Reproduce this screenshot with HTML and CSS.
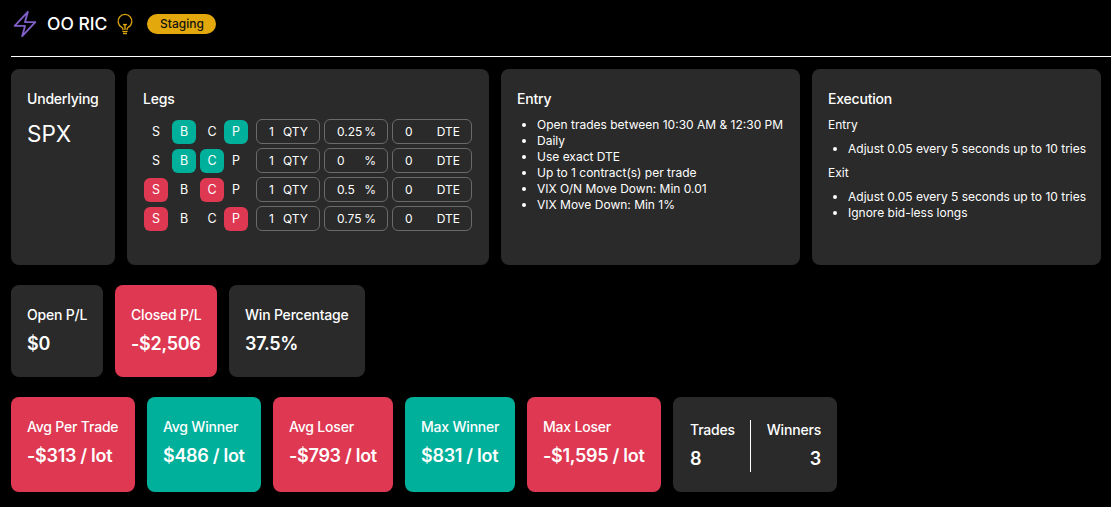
FILE: index.html
```html
<!DOCTYPE html>
<html lang="en">
<head>
<meta charset="utf-8">
<title>OO RIC</title>
<link rel="stylesheet" href="styles.css">
</head>
<body>
<header class="header">
  <svg class="bolt" width="24" height="24" viewBox="2.4 2.4 19.2 19.2" fill="none" stroke="#8060c8" stroke-width="1.5" stroke-linejoin="round" stroke-linecap="round"><path d="M3.75 13.5 14.25 2.25 12 10.5h8.25L9.75 21.75 12 13.5H3.75Z"/></svg>
  <h1 class="title">OO RIC</h1>
  <svg class="bulb" width="22" height="22" viewBox="0 0 24 24" fill="none" stroke="#dca60c" stroke-width="1.5" stroke-linecap="round" stroke-linejoin="round"><path d="M12 18v-5.25m0 0a6 6 0 0 0 1.5-.19m-1.5.19a6 6 0 0 1-1.5-.19m3.75 7.48a12 12 0 0 1-4.5 0m3.75 2.38a14.4 14.4 0 0 1-3 0M14.25 18v-.19c0-.98.66-1.82 1.51-2.32a7.5 7.5 0 1 0-7.52 0c.85.5 1.51 1.34 1.51 2.32V18"/></svg>
  <span class="badge">Staging</span>
</header>
<main class="main">
  <section class="row row-top">
    <div class="card">
      <h2 class="card-title">Underlying</h2>
      <div class="underlying">SPX</div>
    </div>
    <div class="card">
      <h2 class="card-title">Legs</h2>
      <div class="legs">
        <div class="leg">
          <div class="toggles"><span class="tg">S</span><span class="tg on-green">B</span><span class="tg">C</span><span class="tg on-green">P</span></div>
          <div class="field f-qty"><span>1</span><span>QTY</span></div>
          <div class="field f-pct"><span>0.25</span><span>%</span></div>
          <div class="field f-dte"><span>0</span><span>DTE</span></div>
        </div>
        <div class="leg">
          <div class="toggles"><span class="tg">S</span><span class="tg on-green">B</span><span class="tg on-green">C</span><span class="tg">P</span></div>
          <div class="field f-qty"><span>1</span><span>QTY</span></div>
          <div class="field f-pct"><span>0</span><span>%</span></div>
          <div class="field f-dte"><span>0</span><span>DTE</span></div>
        </div>
        <div class="leg">
          <div class="toggles"><span class="tg on-red">S</span><span class="tg">B</span><span class="tg on-red">C</span><span class="tg">P</span></div>
          <div class="field f-qty"><span>1</span><span>QTY</span></div>
          <div class="field f-pct"><span>0.5</span><span>%</span></div>
          <div class="field f-dte"><span>0</span><span>DTE</span></div>
        </div>
        <div class="leg">
          <div class="toggles"><span class="tg on-red">S</span><span class="tg">B</span><span class="tg">C</span><span class="tg on-red">P</span></div>
          <div class="field f-qty"><span>1</span><span>QTY</span></div>
          <div class="field f-pct"><span>0.75</span><span>%</span></div>
          <div class="field f-dte"><span>0</span><span>DTE</span></div>
        </div>
      </div>
    </div>
    <div class="card">
      <h2 class="card-title">Entry</h2>
      <ul class="list list-entry">
        <li>Open trades between 10:30 AM &amp; 12:30 PM</li>
        <li>Daily</li>
        <li>Use exact DTE</li>
        <li>Up to 1 contract(s) per trade</li>
        <li>VIX O/N Move Down: Min 0.01</li>
        <li>VIX Move Down: Min 1%</li>
      </ul>
    </div>
    <div class="card">
      <h2 class="card-title title-exec">Execution</h2>
      <h3 class="sub">Entry</h3>
      <ul class="list">
        <li>Adjust 0.05 every 5 seconds up to 10 tries</li>
      </ul>
      <h3 class="sub">Exit</h3>
      <ul class="list">
        <li>Adjust 0.05 every 5 seconds up to 10 tries</li>
        <li>Ignore bid-less longs</li>
      </ul>
    </div>
  </section>
  <section class="row row-mid">
    <div class="stat"><div class="stat-label">Open P/L</div><div class="stat-value">$0</div></div>
    <div class="stat red"><div class="stat-label">Closed P/L</div><div class="stat-value">-$2,506</div></div>
    <div class="stat"><div class="stat-label">Win Percentage</div><div class="stat-value">37.5%</div></div>
  </section>
  <section class="row row-bottom">
    <div class="stat red"><div class="stat-label">Avg Per Trade</div><div class="stat-value">-$313 / lot</div></div>
    <div class="stat green"><div class="stat-label">Avg Winner</div><div class="stat-value">$486 / lot</div></div>
    <div class="stat red"><div class="stat-label">Avg Loser</div><div class="stat-value">-$793 / lot</div></div>
    <div class="stat green"><div class="stat-label">Max Winner</div><div class="stat-value">$831 / lot</div></div>
    <div class="stat red"><div class="stat-label">Max Loser</div><div class="stat-value">-$1,595 / lot</div></div>
    <div class="stat split">
      <div class="split-col"><div class="stat-label">Trades</div><div class="stat-value">8</div></div>
      <div class="split-rule"></div>
      <div class="split-col right"><div class="stat-label">Winners</div><div class="stat-value">3</div></div>
    </div>
  </section>
</main>
</body>
</html>
```

FILE: styles.css
```css
* { box-sizing: border-box; }
html, body { margin: 0; padding: 0; }
body {
  background: #000;
  color: #fff;
  font-family: Inter, "Liberation Sans", sans-serif;
  font-size: 12px;
  height: 507px;
  overflow: hidden;
  white-space: nowrap;
}
.header {
  display: flex;
  align-items: center;
  height: 57px;
  margin-left: 11px;
  padding: 0 0 9px 2px;
  border-bottom: 1px solid #fff;
}
.bolt { width: 24px; height: 24px; overflow: visible; }
.title {
  margin: 0 0 0 10px;
  font-size: 17.5px;
  font-weight: 500;
  line-height: 24px;
}
.bulb { margin-left: 7px; }
.badge {
  margin-left: 11px;
  height: 20px;
  width: 69px;
  border-radius: 10px;
  background: #e2a80c;
  color: #111;
  font-size: 12px;
  font-weight: 500;
  line-height: 20px;
  text-align: center;
}
.main { padding: 12px 10px 0 11px; }
.row { display: flex; }
.row-top { gap: 12px; height: 196px; }
.row-mid { gap: 12px; height: 92px; margin-top: 20px; }
.row-bottom { gap: 12px; height: 95px; margin-top: 20px; }
.card {
  background: #2a2a2a;
  border-radius: 8px;
  padding: 21px 16px 16px;
}
.row-top .card:nth-child(1) { width: 104px; }
.row-top .card:nth-child(2) { width: 362px; }
.row-top .card:nth-child(3) { width: 299px; }
.row-top .card:nth-child(4) { width: 289px; }
.card-title {
  margin: 0;
  font-size: 14px;
  font-weight: 500;
  letter-spacing: -0.2px;
  line-height: 17px;
}
.title-exec { margin-bottom: 10px; }
.underlying {
  margin-top: 12px;
  font-size: 22.5px;
  font-weight: 400;
  line-height: 29px;
}
.legs { display: flex; flex-direction: column; gap: 4px; margin-top: 12px; padding-left: 1px; }
.leg { display: flex; gap: 4px; height: 25px; align-items: center; }
.toggles { display: flex; gap: 4px; width: 104px; margin-right: 4px; }
.tg {
  flex: none;
  width: 24px;
  height: 24px;
  border-radius: 6px;
  font-size: 12.5px;
  line-height: 24px;
  text-align: center;
}
.tg:nth-child(4) { margin-left: -4px; }
.on-green { background: #00b09b; }
.on-red { background: #de3852; }
.field {
  display: flex;
  justify-content: space-between;
  align-items: center;
  height: 25px;
  border: 1px solid #6a6a6a;
  border-radius: 6px;
  font-size: 12px;
}
.f-qty { width: 64px; padding: 0 11px 0 12px; }
.f-pct { width: 64px; padding: 0 11px 0 12px; }
.f-dte { width: 80px; padding: 0 11px 0 12px; }
.list {
  margin: 8px 0 0;
  padding: 0 0 0 20px;
  font-size: 12px;
  line-height: 16px;
}
.list-entry { margin-top: 10px; }
.sub {
  margin: 8px 0 0;
  font-size: 12px;
  font-weight: 400;
  line-height: 16px;
}
.stat {
  background: #2a2a2a;
  border-radius: 8px;
  padding: 21px 16px 0;
}
.stat-label {
  font-size: 14px;
  font-weight: 500;
  letter-spacing: -0.2px;
  line-height: 17px;
}
.stat-value {
  margin-top: 10px;
  font-size: 18px;
  font-weight: 600;
  letter-spacing: -0.3px;
  line-height: 22px;
}
.red { background: #de3852; }
.green { background: #00b09b; }
.row-mid .stat:nth-child(1) { width: 92px; }
.row-mid .stat:nth-child(2) { width: 102px; }
.row-mid .stat:nth-child(3) { width: 136px; }
.row-bottom .stat:nth-child(1) { width: 124px; }
.row-bottom .stat:nth-child(2) { width: 114px; }
.row-bottom .stat:nth-child(3) { width: 120px; }
.row-bottom .stat:nth-child(4) { width: 110px; }
.row-bottom .stat:nth-child(5) { width: 134px; }
.split {
  display: flex;
  width: 164px;
  justify-content: space-between;
  padding: 24px 16px 0 17px;
}
.split-rule {
  width: 1px;
  height: 52px;
  margin-top: -1px;
  background: #fff;
}
.right { text-align: right; }
```
